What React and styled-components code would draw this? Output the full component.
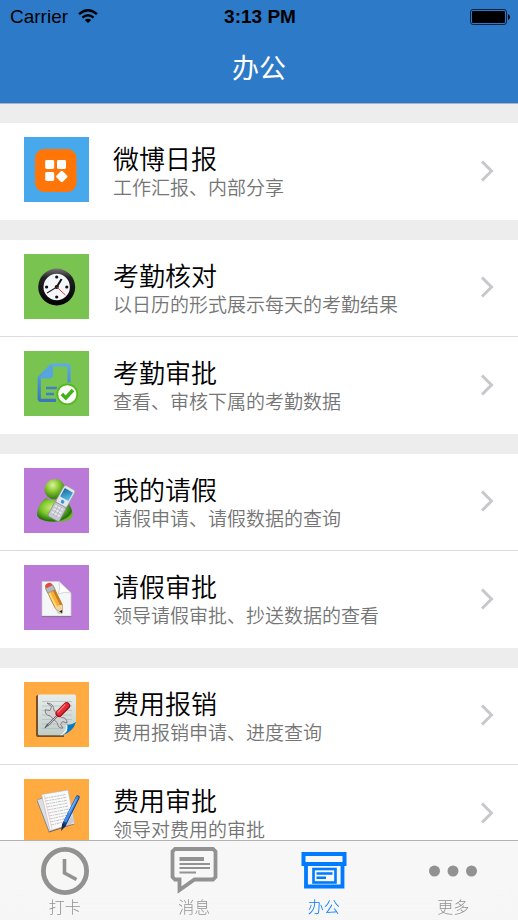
import { useState } from "react";
import styled, { createGlobalStyle } from "styled-components";

const GlobalStyle = createGlobalStyle`
  * {
    box-sizing: border-box;
  }
  html {
    scrollbar-width: none;
  }
  body {
    margin: 0;
    background-color: #ededed;
    font-family: "Liberation Sans", "Noto Sans CJK SC", sans-serif;
  }
  button {
    font-family: inherit;
    border: none;
    margin: 0;
    cursor: pointer;
  }
`;

function WifiIcon() {
  return (
    <svg width="20" height="15" viewBox="0 0 20 15" fill="none" stroke="#000" strokeWidth="2.4">
      <path d="M1 5.2 Q10 -2.6 19 5.2" />
      <path d="M4.4 8.6 Q10 3.8 15.6 8.6" />
      <path d="M10 14 L6.8 11 Q10 8.4 13.2 11 Z" fill="#000" stroke="none" />
    </svg>
  );
}

function BatteryIcon() {
  return (
    <svg width="40" height="16" viewBox="0 0 40 16">
      <rect x="0.5" y="0.5" width="36" height="15" rx="2.5" fill="none" stroke="#0b2340" />
      <rect x="2" y="2" width="33" height="12" rx="1" fill="#000" />
      <path d="M38 5 q2 1 2 3 t-2 3 z" fill="#000" />
    </svg>
  );
}

function ReportIcon() {
  return (
    <svg viewBox="0 0 65 65">
      <rect width="65" height="65" fill="#47a8ec" />
      <rect x="11" y="12" width="41.5" height="43" rx="9" fill="#ff7508" />
      <g fill="#fff">
        <rect x="21.2" y="23" width="9" height="9" rx="1.4" />
        <rect x="33" y="23" width="9" height="9" rx="1.4" />
        <rect x="21.2" y="35" width="9" height="9" rx="1.4" />
        <rect x="33.4" y="35.2" width="8.8" height="8.8" rx="1.4" transform="rotate(45 37.8 39.6)" />
      </g>
    </svg>
  );
}

function WallClockIcon() {
  return (
    <svg viewBox="0 0 65 65">
      <defs>
        <linearGradient id="clockRim" x1="0" y1="0" x2="0" y2="1">
          <stop offset="0" stopColor="#777" />
          <stop offset="0.25" stopColor="#222" />
          <stop offset="1" stopColor="#000" />
        </linearGradient>
      </defs>
      <rect width="65" height="65" fill="#79c450" />
      <circle cx="32.7" cy="33" r="18.5" fill="url(#clockRim)" />
      <circle cx="32.7" cy="33" r="13.2" fill="#f4f6fa" />
      <g fill="#111">
        <circle cx="32.7" cy="23" r="1.6" />
        <circle cx="42.8" cy="33" r="1.6" />
        <circle cx="32.7" cy="43" r="1.6" />
        <circle cx="22.6" cy="33" r="1.6" />
        <circle cx="32.7" cy="33" r="2" />
      </g>
      <path d="M32.7 33 L37.6 25" stroke="#111" strokeWidth="2" />
      <path d="M34.5 32 L23 39" stroke="#222" strokeWidth="1.1" />
      <path d="M32.7 33 L41.4 41" stroke="#e2332c" strokeWidth="1" />
    </svg>
  );
}

function CheckedFileIcon() {
  return (
    <svg viewBox="0 0 65 65">
      <defs>
        <linearGradient id="fileBlue" x1="0" y1="0" x2="0" y2="1">
          <stop offset="0" stopColor="#5cabe6" />
          <stop offset="1" stopColor="#3a76bd" />
        </linearGradient>
      </defs>
      <rect width="65" height="65" fill="#79c450" />
      <path
        d="M27.5 14 H43 Q45 14 45 16 V34 M32 49.3 H17 Q15.2 49.3 15.2 47.5 V27 L27.5 14"
        fill="none"
        stroke="url(#fileBlue)"
        strokeWidth="3.2"
      />
      <path d="M27 13.5 L29 16 V24 Q29 27.5 25 27.5 H17 L15 27 Z" fill="#58a4df" />
      <path d="M22 37 H33 M22 43 H30" stroke="#3e80c4" strokeWidth="2.4" />
      <circle cx="43.3" cy="43.3" r="12" fill="#79c450" />
      <circle cx="43.3" cy="43.3" r="10" fill="#fff" stroke="#52b91c" strokeWidth="1.8" />
      <path d="M37.8 43 L41.8 47 L49 39" fill="none" stroke="#3fb414" strokeWidth="3.6" />
    </svg>
  );
}

function ContactIcon() {
  return (
    <svg viewBox="0 0 65 65">
      <defs>
        <radialGradient id="headGreen" cx="0.4" cy="0.3" r="0.8">
          <stop offset="0" stopColor="#dcf5a0" />
          <stop offset="0.4" stopColor="#86c62f" />
          <stop offset="0.8" stopColor="#35830f" />
          <stop offset="1" stopColor="#5aa71c" />
        </radialGradient>
        <radialGradient id="bodyGreen" cx="0.42" cy="0.4" r="0.62">
          <stop offset="0" stopColor="#d0ef78" />
          <stop offset="0.5" stopColor="#7cc52b" />
          <stop offset="0.9" stopColor="#246f10" />
          <stop offset="1" stopColor="#6cb923" />
        </radialGradient>
        <linearGradient id="phoneScreen" x1="0" y1="0" x2="1" y2="1">
          <stop offset="0" stopColor="#17679b" />
          <stop offset="1" stopColor="#5cc7ed" />
        </linearGradient>
      </defs>
      <rect width="65" height="65" fill="#bb7ad8" />
      <path
        d="M22 30 C16 34 12 43 13.3 48 Q16 54 31 54 Q46 54 48.7 48 C49 42 45 34 39 30 Q31 35 22 30 Z"
        fill="url(#bodyGreen)"
      />
      <circle cx="30.8" cy="21.3" r="10.3" fill="url(#headGreen)" />
      <g transform="rotate(29 39 34)">
        <rect x="32.2" y="18" width="12.6" height="20" rx="2.4" fill="#e5e5ea" stroke="#9696a3" strokeWidth="0.7" />
        <rect x="33.8" y="21" width="9.4" height="9.6" rx="0.5" fill="url(#phoneScreen)" />
        <circle cx="38.5" cy="34" r="1.8" fill="#3997d4" />
        <rect x="32" y="37.5" width="13" height="16" rx="2" fill="#c7c7cf" stroke="#888893" strokeWidth="0.7" />
        <path d="M34 41 H43 M34 44.5 H43 M34 48 H43" stroke="#e8e8ed" strokeWidth="1.8" />
        <path d="M36.8 39.5 V50 M40.2 39.5 V50" stroke="#a5a5b0" strokeWidth="0.6" />
      </g>
    </svg>
  );
}

function PencilPageIcon() {
  return (
    <svg viewBox="0 0 65 65">
      <rect width="65" height="65" fill="#bb7ad8" />
      <path d="M18 16.5 H35 L47 28 V51 H18 Z" fill="#f5f6f7" stroke="#cacad0" strokeWidth="0.7" />
      <path d="M18 51.6 H47.3" stroke="#7f6a8a" strokeWidth="0.9" />
      <path d="M35 16.5 Q36.5 24 34.5 29 Q41 26 47 28 Z" fill="#fff" stroke="#c4c5cc" strokeWidth="0.7" />
      <path d="M24 31 L38 49 L34 49 Z" fill="#cfcfd6" />
      <g transform="rotate(-26 24 20)">
        <path d="M20.4 23 V44 L24.3 51.5 L28.2 44 V23 Z" fill="#f5ae36" stroke="#95661f" strokeWidth="0.6" />
        <path d="M20.8 27 H22.8 V44 H20.8 Z" fill="#fbd677" />
        <path d="M26 27 H28 V44 H26 Z" fill="#c67b1b" />
        <path d="M20.4 44 L24.3 51.5 L28.2 44 Q24 42 20.4 44 Z" fill="#f0d4a1" />
        <path d="M22.8 48.6 L24.3 51.5 L25.8 48.6 Z" fill="#222" />
        <rect x="20.2" y="22" width="8.2" height="5.2" fill="#b5b8c1" stroke="#7e818b" strokeWidth="0.5" />
        <path d="M20.4 22 Q20.4 18.2 24.3 18.2 Q28.2 18.2 28.2 22 Z" fill="#e5493a" />
      </g>
    </svg>
  );
}

function ToolsIcon() {
  return (
    <svg viewBox="0 0 65 65">
      <defs>
        <linearGradient id="toolPage" x1="0" y1="0" x2="0" y2="1">
          <stop offset="0" stopColor="#e8edea" />
          <stop offset="1" stopColor="#bfcdc9" />
        </linearGradient>
      </defs>
      <rect width="65" height="65" fill="#ffab42" />
      <path d="M12 14 V53 Q12 55 14 55 H40 V52 L14 13 Z" fill="#74502b" />
      <path d="M15.5 12.5 H50.5 Q52 12.5 52 14 V40 L40 53.3 H15.5 Q14 53.3 14 51.8 V14 Q14 12.5 15.5 12.5 Z" fill="url(#toolPage)" />
      <path
        d="M18 19.5 H48 M18 24 H48 M18 28.5 H48 M18 33 H48 M18 37.5 H48 M18 42 H42 M18 46.5 H39"
        stroke="#aebab7"
        strokeWidth="0.7"
      />
      <path d="M52 40 Q49 50 38 53.5 Q43 49 42 42 Q46 44 52 40 Z" fill="#087ac3" />
      <path d="M42 42 Q43 49 36 53.5 Q40 53 43 49 Q43.6 46 43.4 43 Z" fill="#e9f5f8" />
      <path
        d="M23 21 L27.5 24.5 L26 28.5 L21.2 27.7 Q20.8 33.3 26.3 34 L33.5 41 Q33.8 46.5 39 46 L36.5 42.5 L38.5 39.5 L43 41 Q43 35.5 37.5 35.5 L30 28.5 Q30 21.5 23 21 Z"
        fill="#d5d2d6"
        stroke="#77747a"
        strokeWidth="0.9"
      />
      <path d="M34.5 32.5 L23 44" stroke="#67666c" strokeWidth="2" />
      <path d="M34.5 32.5 L23 44" stroke="#d7d7db" strokeWidth="0.8" />
      <path d="M24 42 L21 45.8" stroke="#555" strokeWidth="1.3" />
      <path d="M42.7 23.7 L35 31.5" stroke="#9b1018" strokeWidth="7" strokeLinecap="round" />
      <path d="M42.5 23.5 L35 31" stroke="#e62a34" strokeWidth="5.2" strokeLinecap="round" />
      <path d="M41 22.8 L34 30" stroke="#f68086" strokeWidth="1.2" strokeLinecap="round" />
    </svg>
  );
}

function PenPapersIcon() {
  return (
    <svg viewBox="0 0 65 65">
      <rect width="65" height="65" fill="#ffab42" />
      <path d="M13 22 L19 18 L42 44 L51 45 L25 53.5 Z" fill="#6d5844" />
      <path d="M13 21 L38 12 L49 44 L25 52.5 Z" fill="#dedfe3" stroke="#878890" strokeWidth="0.6" />
      <path d="M17.5 15.5 L44 11 L50.5 44.5 L26 51.5 Z" fill="#fafafa" stroke="#b3b2b5" strokeWidth="0.6" />
      <path
        d="M21 19.2 L42 15.5 M21.7 22 L42.6 18.3 M22.4 25 L43.2 21.2 M23 28 L43.8 24 M23.7 31 L44.4 27 M24.4 34 L45 30 M25 37 L45.6 33 M25.7 40 L44 36 M26.4 43 L42 39.5 M27 46 L40 42.8"
        stroke="#b6b6bb"
        strokeWidth="0.8"
        strokeDasharray="3 0.7 1.6 0.6"
      />
      <path d="M20 16 L28 50" stroke="#efb9b9" strokeWidth="0.6" />
      <path d="M40 49 L50 43 L48 36 Z" fill="#aaaab3" opacity="0.6" />
      <path d="M53.7 18.4 L40.2 45.5" stroke="#133f8a" strokeWidth="4" strokeLinecap="round" />
      <path d="M53.3 18.4 L41.5 42" stroke="#3c8ce8" strokeWidth="2.8" strokeLinecap="round" />
      <path d="M52.2 20 L45 34" stroke="#91c4fa" strokeWidth="0.8" />
      <path d="M38.2 44.4 L42.3 46.5 L37 52 Z" fill="#172b50" />
    </svg>
  );
}

function ChevronIcon() {
  return (
    <svg width="14" height="22" viewBox="0 0 14 22" fill="none" stroke="#c7c7cc" strokeWidth="3">
      <path d="M2 1.5 L11.5 11 L2 20.5" />
    </svg>
  );
}

function ClockTabIcon() {
  return (
    <svg width="48" height="48" viewBox="0 0 48 48" fill="none" stroke="currentColor">
      <circle cx="24" cy="24" r="21.6" strokeWidth="4.8" />
      <path d="M23.5 12 V26 L35.5 32.5" strokeWidth="3.6" />
    </svg>
  );
}

function MessageTabIcon() {
  return (
    <svg width="48" height="48" viewBox="0 0 48 48" fill="none" stroke="currentColor">
      <path
        d="M5 2 H43 L45.5 4.5 V30 L43 32.5 H24.5 L9.5 43 V32.5 H5 L2.5 30 V4.5 Z"
        strokeWidth="3.8"
      />
      <path d="M9.5 12 H34" strokeWidth="4" />
      <path d="M9.5 17 H40 M9.5 21 H40 M9.5 25.5 H26" strokeWidth="2" />
    </svg>
  );
}

function OfficeTabIcon() {
  return (
    <svg width="48" height="48" viewBox="0 0 48 48" fill="none" stroke="currentColor">
      <path d="M3.5 7 H44.5 V17 H3.5 Z" strokeWidth="4" />
      <path d="M6 18 V39.5 H42.5 V18" strokeWidth="3.8" />
      <rect x="13.5" y="22" width="22" height="13.5" strokeWidth="2.6" />
      <path d="M16.5 26.5 H32.5 M16.5 30.8 H26" strokeWidth="2.4" />
    </svg>
  );
}

function MoreTabIcon() {
  return (
    <svg width="48" height="48" viewBox="0 0 48 48" fill="currentColor">
      <circle cx="5.5" cy="24" r="5.5" />
      <circle cx="24" cy="24" r="5.5" />
      <circle cx="42.5" cy="24" r="5.5" />
    </svg>
  );
}

const groups = [
  [{ title: "微博日报", summary: "工作汇报、内部分享", Icon: ReportIcon }],
  [
    { title: "考勤核对", summary: "以日历的形式展示每天的考勤结果", Icon: WallClockIcon },
    { title: "考勤审批", summary: "查看、审核下属的考勤数据", Icon: CheckedFileIcon },
  ],
  [
    { title: "我的请假", summary: "请假申请、请假数据的查询", Icon: ContactIcon },
    { title: "请假审批", summary: "领导请假审批、抄送数据的查看", Icon: PencilPageIcon },
  ],
  [
    { title: "费用报销", summary: "费用报销申请、进度查询", Icon: ToolsIcon },
    { title: "费用审批", summary: "领导对费用的审批", Icon: PenPapersIcon },
  ],
];

const tabs = [
  { name: "打卡", Icon: ClockTabIcon },
  { name: "消息", Icon: MessageTabIcon },
  { name: "办公", Icon: OfficeTabIcon },
  { name: "更多", Icon: MoreTabIcon },
];

function App() {
  const [current, setCurrent] = useState("办公");

  return (
    <>
      <GlobalStyle />
      <Header>
        <StatusBar>
          <Carrier>
            Carrier
            <WifiIcon />
          </Carrier>
          <Time>3:13 PM</Time>
          <Battery>
            <BatteryIcon />
          </Battery>
        </StatusBar>
        <PageTitle>办公</PageTitle>
      </Header>
      <Menu>
        {groups.map((group) => (
          <Group key={group[0].title}>
            {group.map(({ title, summary, Icon }) => (
              <Row key={title}>
                <IconBox>
                  <Icon />
                </IconBox>
                <RowText>
                  <RowTitle>{title}</RowTitle>
                  <RowSummary>{summary}</RowSummary>
                </RowText>
                <ChevronIcon />
              </Row>
            ))}
          </Group>
        ))}
      </Menu>
      <TabBar>
        {tabs.map(({ name, Icon }) => (
          <Tab key={name} $active={name === current} onClick={() => setCurrent(name)}>
            <Icon />
            <TabName>{name}</TabName>
          </Tab>
        ))}
      </TabBar>
    </>
  );
}

const Header = styled.header`
  background-color: #2d7ac8;
  border-bottom: 1px solid #a9b4c0;
`;

const StatusBar = styled.div`
  display: grid;
  grid-template-columns: 1fr auto 1fr;
  align-items: center;
  height: 33px;
  padding: 0 8px 0 10px;
  color: #000;
  font-size: 19px;
`;

const Carrier = styled.div`
  display: flex;
  align-items: center;
  gap: 10px;
`;

const Time = styled.div`
  font-weight: 700;
`;

const Battery = styled.div`
  display: flex;
  justify-content: flex-end;
`;

const PageTitle = styled.h1`
  margin: 0;
  height: 70px;
  padding-top: 2px;
  line-height: 68px;
  text-align: center;
  color: white;
  font-size: 27px;
  font-weight: 400;
`;

const Menu = styled.main`
  display: flex;
  flex-direction: column;
  gap: 20px;
  padding: 19px 0 100px;
`;

const Group = styled.section`
  background-color: white;
`;

const Row = styled.button`
  display: flex;
  align-items: flex-start;
  width: 100%;
  height: 97px;
  padding: 14px 24px 0;
  background-color: white;
  text-align: left;
  &:not(:last-child) {
    border-bottom: 1px solid #dcdcdc;
  }
  > svg {
    align-self: center;
    margin-bottom: 16px;
  }
`;

const IconBox = styled.span`
  width: 65px;
  height: 65px;
  flex-shrink: 0;
  svg {
    display: block;
    width: 100%;
    height: 100%;
  }
`;

const RowText = styled.span`
  display: flex;
  flex-direction: column;
  flex: 1;
  margin-left: 24px;
  padding-top: 7px;
`;

const RowTitle = styled.span`
  color: #000;
  font-size: 26px;
  line-height: 32px;
  font-weight: 350;
`;

const RowSummary = styled.span`
  color: #757575;
  font-size: 19px;
  line-height: 26px;
  font-weight: 350;
`;

const TabBar = styled.nav`
  position: fixed;
  left: 0;
  right: 0;
  bottom: 0;
  display: flex;
  height: 80px;
  border-top: 1px solid #b2b2b2;
  background-color: rgba(247, 247, 247, 0.95);
  backdrop-filter: blur(20px);
`;

const Tab = styled.button`
  flex: 1;
  display: flex;
  flex-direction: column;
  align-items: center;
  gap: 1px;
  padding: 6px 0 0;
  background: none;
  color: ${(props) => (props.$active ? "#007aff" : "#929292")};
  svg {
    flex-shrink: 0;
  }
`;

const TabName = styled.span`
  font-size: 16px;
  line-height: 24px;
  font-weight: 300;
`;

export default App;
